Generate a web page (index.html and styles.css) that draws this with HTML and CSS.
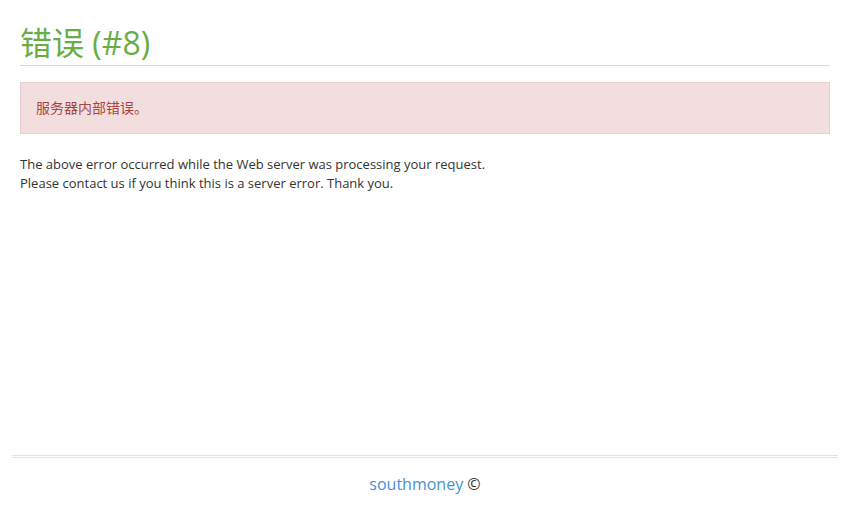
FILE: index.html
```html
<!DOCTYPE html>
<html lang="zh-CN">
<head>
    <meta charset="utf-8">
    <title>错误 (#8)</title>
    <link rel="stylesheet" href="styles.css">
</head>
<body>
<div class="page">
    <div class="site-error">
        <h1 class="title">错误 (#8)</h1>
        <div class="alert">服务器内部错误。</div>
        <p class="note">
            The above error occurred while the Web server was processing your request.<br>
            Please contact us if you think this is a server error. Thank you.
        </p>
    </div>
    <div class="footer">
        <hr class="rule">
        <p class="copy"><a href="#">southmoney</a> &copy;</p>
    </div>
</div>
</body>
</html>
```

FILE: styles.css
```css
html, body {
    margin:0;
    padding:0;
    background:#fff;
}
body {
    font-family:"Open Sans", "Noto Sans CJK SC", sans-serif;
    color:#333;
}
.page {
    display:flex;
    flex-direction:column;
    min-height:100vh;
}
.site-error {
    flex:1;
    padding:0 20px;
}
.title {
    margin:23px 0 0;
    padding-bottom:2px;
    font-size:32px;
    font-weight:normal;
    line-height:40px;
    color:#6aac46;
    border-bottom:1px solid #cfe3c0;
}
.alert {
    margin-top:16px;
    padding:15px;
    font-size:14px;
    line-height:20px;
    color:#a94442;
    background-color:#f2dede;
    border:1px solid #ebccd1;
}
.note {
    margin:21px 0 0;
    font-size:13px;
    line-height:19px;
}
.footer {
    padding:0 12px 20px;
}
.rule {
    margin:0;
    height:1px;
    border:0;
    border-top:1px solid #e3e3e3;
    border-bottom:1px solid #e3e3e3;
}
.copy {
    margin:15px 0 0;
    text-align:center;
    font-size:16px;
    line-height:22px;
}
.copy a {
    color:#4a90d2;
    text-decoration:none;
}
```
